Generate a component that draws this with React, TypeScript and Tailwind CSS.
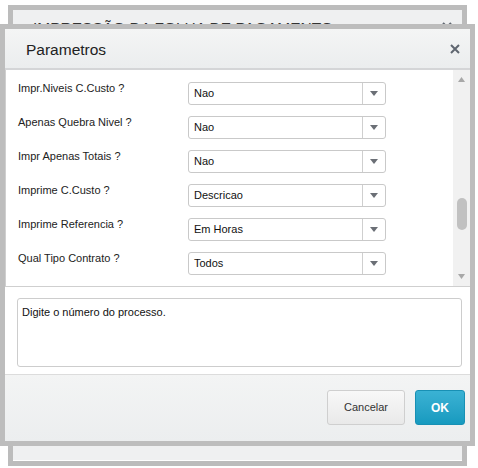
const rows = [
  { label: 'Impr.Niveis C.Custo ?', value: 'Nao' },
  { label: 'Apenas Quebra Nivel ?', value: 'Nao' },
  { label: 'Impr Apenas Totais ?', value: 'Nao' },
  { label: 'Imprime C.Custo ?', value: 'Descricao' },
  { label: 'Imprime Referencia ?', value: 'Em Horas' },
  { label: 'Qual Tipo Contrato ?', value: 'Todos' },
];

function CloseIcon({ className = '' }: { className?: string }) {
  return (
    <svg width="10" height="10" viewBox="0 0 10 10" className={className}>
      <path d="M1 1 L9 9 M9 1 L1 9" stroke="currentColor" strokeWidth="2" />
    </svg>
  );
}

function SelectBox({ value }: { value: string }) {
  return (
    <div className="flex h-[23px] w-[198px] items-stretch rounded-[3px] border border-[#c9c9c9] bg-white">
      <div className="flex flex-1 items-center pl-[5px] text-[11px] text-[#111]">{value}</div>
      <div className="flex w-[23px] items-center justify-center border-l border-[#cfcfcf]">
        <svg width="8" height="5" viewBox="0 0 8 5">
          <path d="M0 0 H8 L4 5 Z" fill="#6b6f76" />
        </svg>
      </div>
    </div>
  );
}

export default function App() {
  return (
    <div className="relative h-[468px] w-[478px] overflow-hidden bg-white font-['Liberation_Sans',Arial,sans-serif] text-[#333]">
      {/* dialog behind */}
      <div className="absolute left-[8px] top-[5px] flex h-[461px] w-[459px] flex-col border-[5px] border-[#bcbcbc] bg-[#eff0f1]">
        <div className="flex h-[40px] items-start justify-between pl-[20px] pr-[10px] pt-[6px]">
          <span className="text-[15.5px] uppercase text-[#333]">Impressão da Folha de Pagamento</span>
          <CloseIcon className="mt-[6px] text-[#5f6670]" />
        </div>
        <div className="flex-1" />
        <div className="h-px bg-white" />
      </div>

      {/* front dialog */}
      <div className="absolute left-0 top-[24px] flex h-[422px] w-[475px] flex-col border-[5px] border-[#bdbdbd] bg-white">
        <div className="flex h-[41px] items-center justify-between border-b-2 border-[#d4d5d7] bg-gradient-to-b from-[#f4f5f5] to-[#ebedee] pl-[21px] pr-[10px] pt-[3px]">
          <span className="text-[15.5px] text-[#222]">Parametros</span>
          <CloseIcon className="-mt-[3px] text-[#5f6670]" />
        </div>

        <div className="flex h-[217px] border-b border-l border-[#cfcfcf]">
          <div className="flex flex-1 flex-col gap-[11px] pl-[12px] pt-[12px]">
            {rows.map((r) => (
              <div key={r.label} className="flex items-start">
                <div className="-mt-[2px] w-[170px] text-[11px] text-[#222]">{r.label}</div>
                <SelectBox value={r.value} />
              </div>
            ))}
          </div>
          <div className="flex w-[17px] flex-col items-center bg-[#f1f1f1] pb-[7px] pt-[7px]">
            <svg width="7" height="5" viewBox="0 0 7 5">
              <path d="M0 5 H7 L3.5 0 Z" fill="#a8a8a8" />
            </svg>
            <div className="h-[116px]" />
            <div className="h-[32px] w-[10px] rounded-[5px] bg-[#c1c1c1]" />
            <div className="flex-1" />
            <svg width="7" height="5" viewBox="0 0 7 5">
              <path d="M0 0 H7 L3.5 5 Z" fill="#a8a8a8" />
            </svg>
          </div>
        </div>

        <div className="pb-[7px] pl-[12px] pr-[8px] pt-[11px]">
          <div className="h-[69px] rounded-[3px] border border-[#cdcdcd] px-[4px] pt-[5px] text-[11px] text-[#111]">
            Digite o número do processo.
          </div>
        </div>

        <div className="flex flex-1 items-start justify-end gap-[10px] border-t border-[#dcdcdc] bg-gradient-to-b from-[#f3f4f4] to-[#eceeef] pr-[5px] pt-[15px]">
          <button className="h-[35px] w-[78px] rounded-[3px] border border-[#cfcfcf] bg-gradient-to-b from-[#f8f8f8] to-[#e9e9e9] text-[11px] text-[#333]">
            Cancelar
          </button>
          <button className="h-[35px] w-[50px] rounded-[3px] border border-[#1890b4] bg-gradient-to-b from-[#3ab2d4] to-[#169abf] text-[12px] font-bold text-white">
            OK
          </button>
        </div>
      </div>
    </div>
  );
}
